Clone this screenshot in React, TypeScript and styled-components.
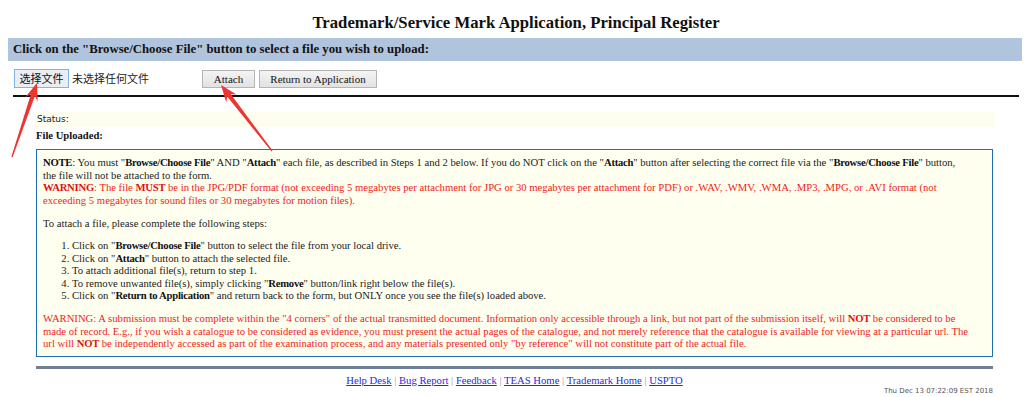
import React from "react";
import styled, { createGlobalStyle } from "styled-components";

const Global = createGlobalStyle`
  html, body { margin: 0; padding: 0; background: #fff; }
  body { font-family: "Liberation Serif", "Times New Roman", serif; color: #000; }
`;

const Page = styled.div`
  position: relative;
  width: 1024px;
  height: 397px;
  padding: 8px;
  box-sizing: border-box;
  overflow: hidden;
`;

const Title = styled.h1`
  margin: 0;
  padding-left: 8px;
  height: 30px;
  line-height: 30px;
  font-size: 16.7px;
  font-weight: bold;
  text-align: center;
  color: #111;
`;

const BlueBar = styled.div`
  margin-right: -6px;
  height: 23px;
  line-height: 23px;
  padding-left: 5px;
  background: #b0c4de;
  font-size: 12.75px;
  font-weight: bold;
  color: #111;
`;

const ButtonRow = styled.div`
  display: flex;
  align-items: flex-start;
  padding: 8px 0 0 6px;
  height: 26px;
`;

const FileButton = styled.button`
  width: 55px;
  height: 19px;
  padding: 0;
  border: 1px solid #7eb4ea;
  background: #e9eef4;
  font-family: "Noto Sans CJK SC", sans-serif;
  font-size: 11px;
  line-height: 17px;
  color: #111;
`;

const FileName = styled.span`
  margin-left: 3px;
  font-family: "Noto Sans CJK SC", sans-serif;
  font-size: 11px;
  line-height: 19px;
  color: #222;
`;

const FormButton = styled.button<{ $w: number; $ml: number }>`
  width: ${(p) => p.$w}px;
  margin-left: ${(p) => p.$ml}px;
  margin-top: 1px;
  height: 18px;
  padding: 0;
  border: 1px solid #b5b5b5;
  background: linear-gradient(#f4f4f4, #e2e2e2);
  font-family: "Liberation Serif", serif;
  font-size: 11px;
  line-height: 16px;
  color: #111;
`;

const BlackRule = styled.div`
  margin: 0 -3px 0 5px;
  height: 2px;
  background: #111;
`;

const Content = styled.div`
  margin-left: 28px;
  width: 957px;
`;

const StatusRow = styled.div`
  margin: 15px 0 0 -1px;
  width: 960px;
  height: 15px;
  line-height: 15px;
  padding-left: 2px;
  box-sizing: border-box;
  background: #fefef0;
  font-family: "DejaVu Sans", Verdana, sans-serif;
  font-size: 9px;
  color: #1a1a1a;
`;

const Uploaded = styled.div`
  margin-top: 2px;
  line-height: 14px;
  font-size: 10.6px;
  font-weight: bold;
  color: #111;
`;

const NoteBox = styled.div`
  margin-top: 6px;
  border: 1px solid #1f6fb2;
  background: #fffff0;
  padding: 6px 6px;
  font-size: 10.67px;
  line-height: 12.5px;
  color: #222;
  b { letter-spacing: -0.25px; }
`;

const Para = styled.div<{ $red?: boolean; $mt?: number }>`
  white-space: nowrap;
  color: ${(p) => (p.$red ? "#f01c1c" : "#222")};
  margin-top: ${(p) => p.$mt ?? 0}px;
  b { color: ${(p) => (p.$red ? "#e01010" : "#111")}; }
`;

const Steps = styled.ol`
  margin: 9.5px 0 0 0;
  padding-left: 29px;
  white-space: nowrap;
  li b { color: #111; }
`;

const GrayRule = styled.div`
  margin-top: 9px;
  height: 3px;
  background: #708090;
`;

const Footer = styled.div`
  margin-top: 5px;
  text-align: center;
  font-size: 10.67px;
  line-height: 13px;
  white-space: pre;
`;

const FootLink = styled.a`
  color: #2a2ad6;
  text-decoration: underline;
`;

const Sep = styled.span`
  color: #999;
`;

const DateLine = styled.div`
  text-align: right;
  font-family: "DejaVu Sans", Verdana, sans-serif;
  font-size: 7px;
  line-height: 8px;
  color: #555;
`;

const Overlay = styled.svg`
  position: absolute;
  left: 0;
  top: 0;
  pointer-events: none;
`;

function arrowPoints(tx: number, ty: number, px: number, py: number): string {
  const dx = px - tx;
  const dy = py - ty;
  const len = Math.hypot(dx, dy);
  const ux = dx / len;
  const uy = dy / len;
  const nx = -uy;
  const ny = ux;
  const L = 17;
  const neckBack = 13;
  const pts: [number, number][] = [
    [tx + nx * 0.6, ty + ny * 0.6],
    [px - ux * neckBack + nx * 2.2, py - uy * neckBack + ny * 2.2],
    [px - ux * L + nx * 6.5, py - uy * L + ny * 6.5],
    [px, py],
    [px - ux * L - nx * 6.5, py - uy * L - ny * 6.5],
    [px - ux * neckBack - nx * 2.2, py - uy * neckBack - ny * 2.2],
    [tx - nx * 0.6, ty - ny * 0.6],
  ];
  return pts.map((p) => `${p[0].toFixed(1)},${p[1].toFixed(1)}`).join(" ");
}

const links = ["Help Desk", "Bug Report", "Feedback", "TEAS Home", "Trademark Home", "USPTO"];

export default function App() {
  return (
    <Page>
      <Global />
      <Title>Trademark/Service Mark Application, Principal Register</Title>
      <BlueBar>Click on the "Browse/Choose File" button to select a file you wish to upload:</BlueBar>
      <ButtonRow>
        <FileButton>选择文件</FileButton>
        <FileName>未选择任何文件</FileName>
        <FormButton $w={53} $ml={53}>Attach</FormButton>
        <FormButton $w={118} $ml={4}>Return to Application</FormButton>
      </ButtonRow>
      <BlackRule />
      <Content>
        <StatusRow>Status:</StatusRow>
        <Uploaded>File Uploaded:</Uploaded>
        <NoteBox>
          <Para>
            <b>NOTE</b>: You must "<b>Browse/Choose File</b>" AND "<b>Attach</b>" each file, as described in Steps 1 and 2 below. If you do NOT click on the "<b>Attach</b>" button after selecting the correct file via the "<b>Browse/Choose File</b>" button,
            <br />
            the file will not be attached to the form.
          </Para>
          <Para $red>
            <b>WARNING</b>: The file <b>MUST</b> be in the JPG/PDF format (not exceeding 5 megabytes per attachment for JPG or 30 megabytes per attachment for PDF) or .WAV, .WMV, .WMA, .MP3, .MPG, or .AVI format (not
            <br />
            exceeding 5 megabytes for sound files or 30 megabytes for motion files).
          </Para>
          <Para $mt={11}>To attach a file, please complete the following steps:</Para>
          <Steps>
            <li>Click on "<b>Browse/Choose File</b>" button to select the file from your local drive.</li>
            <li>Click on "<b>Attach</b>" button to attach the selected file.</li>
            <li>To attach additional file(s), return to step 1.</li>
            <li>To remove unwanted file(s), simply clicking "<b>Remove</b>" button/link right below the file(s).</li>
            <li>Click on "<b>Return to Application</b>" and return back to the form, but ONLY once you see the file(s) loaded above.</li>
          </Steps>
          <Para $red $mt={10.5}>
            WARNING: A submission must be complete within the "4 corners" of the actual transmitted document. Information only accessible through a link, but not part of the submission itself, will <b>NOT</b> be considered to be
            <br />
            made of record. E.g., if you wish a catalogue to be considered as evidence, you must present the actual pages of the catalogue, and not merely reference that the catalogue is available for viewing at a particular url. The
            <br />
            url will <b>NOT</b> be independently accessed as part of the examination process, and any materials presented only "by reference" will not constitute part of the actual file.
          </Para>
        </NoteBox>
        <GrayRule />
        <Footer>
          {links.map((l, i) => (
            <React.Fragment key={l}>
              {i > 0 && <Sep> | </Sep>}
              <FootLink href="#">{l}</FootLink>
            </React.Fragment>
          ))}
        </Footer>
        <DateLine>Thu Dec 13 07:22:09 EST 2018</DateLine>
      </Content>
      <Overlay width="1024" height="397" viewBox="0 0 1024 397">
        <polygon points={arrowPoints(12, 157, 37, 83)} fill="#ee3530" />
        <polygon points={arrowPoints(272, 151, 221, 85)} fill="#ee3530" />
      </Overlay>
    </Page>
  );
}
